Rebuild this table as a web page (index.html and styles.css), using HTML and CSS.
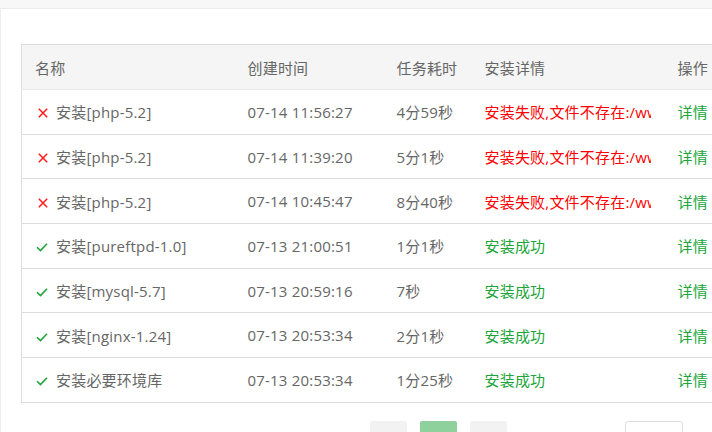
FILE: index.html
```html
<!DOCTYPE html>
<html lang="zh-CN">
<head>
<meta charset="utf-8">
<link rel="stylesheet" href="styles.css">
</head>
<body>
<div class="topbar"></div>
<div class="panel">
  <table class="tasks">
    <colgroup>
      <col class="c-name"><col class="c-time"><col class="c-dur"><col class="c-detail"><col class="c-op">
    </colgroup>
    <thead>
      <tr><th>名称</th><th>创建时间</th><th>任务耗时</th><th>安装详情</th><th>操作</th></tr>
    </thead>
    <tbody>
      <tr>
        <td><span class="st fail"><svg viewBox="0 0 10 10" width="10" height="10"><path d="M0.8 0.8 L9.2 9.2 M9.2 0.8 L0.8 9.2" stroke="#ff1a1a" stroke-width="1.5" fill="none"/></svg></span>安装[php-5.2]</td>
        <td>07-14 11:56:27</td><td>4分59秒</td><td class="msg err"><div class="clip">安装失败,文件不存在:/www/server/php</div></td><td class="op">详情</td>
      </tr>
      <tr>
        <td><span class="st fail"><svg viewBox="0 0 10 10" width="10" height="10"><path d="M0.8 0.8 L9.2 9.2 M9.2 0.8 L0.8 9.2" stroke="#ff1a1a" stroke-width="1.5" fill="none"/></svg></span>安装[php-5.2]</td>
        <td>07-14 11:39:20</td><td>5分1秒</td><td class="msg err"><div class="clip">安装失败,文件不存在:/www/server/php</div></td><td class="op">详情</td>
      </tr>
      <tr>
        <td><span class="st fail"><svg viewBox="0 0 10 10" width="10" height="10"><path d="M0.8 0.8 L9.2 9.2 M9.2 0.8 L0.8 9.2" stroke="#ff1a1a" stroke-width="1.5" fill="none"/></svg></span>安装[php-5.2]</td>
        <td>07-14 10:45:47</td><td>8分40秒</td><td class="msg err"><div class="clip">安装失败,文件不存在:/www/server/php</div></td><td class="op">详情</td>
      </tr>
      <tr>
        <td><span class="st ok"><svg viewBox="0 0 12 12" width="12" height="12"><path d="M1 6.2 L4.5 9.6 L11 2.8" stroke="#20a53a" stroke-width="1.6" fill="none"/></svg></span>安装[pureftpd-1.0]</td>
        <td>07-13 21:00:51</td><td>1分1秒</td><td class="msg okt">安装成功</td><td class="op">详情</td>
      </tr>
      <tr>
        <td><span class="st ok"><svg viewBox="0 0 12 12" width="12" height="12"><path d="M1 6.2 L4.5 9.6 L11 2.8" stroke="#20a53a" stroke-width="1.6" fill="none"/></svg></span>安装[mysql-5.7]</td>
        <td>07-13 20:59:16</td><td>7秒</td><td class="msg okt">安装成功</td><td class="op">详情</td>
      </tr>
      <tr>
        <td><span class="st ok"><svg viewBox="0 0 12 12" width="12" height="12"><path d="M1 6.2 L4.5 9.6 L11 2.8" stroke="#20a53a" stroke-width="1.6" fill="none"/></svg></span>安装[nginx-1.24]</td>
        <td>07-13 20:53:34</td><td>2分1秒</td><td class="msg okt">安装成功</td><td class="op">详情</td>
      </tr>
      <tr>
        <td><span class="st ok"><svg viewBox="0 0 12 12" width="12" height="12"><path d="M1 6.2 L4.5 9.6 L11 2.8" stroke="#20a53a" stroke-width="1.6" fill="none"/></svg></span>安装必要环境库</td>
        <td>07-13 20:53:34</td><td>1分25秒</td><td class="msg okt">安装成功</td><td class="op">详情</td>
      </tr>
    </tbody>
  </table>
  <div class="pager">
    <span class="pbtn"></span>
    <span class="pbtn active"></span>
    <span class="pbtn"></span>
    <span class="pinfo">/</span>
    <span class="pbox"></span>
  </div>
</div>
</body>
</html>
```
FILE: styles.css
```css
html, body {
  margin: 0;
  padding: 0;
  width: 712px;
  height: 432px;
  overflow: hidden;
  background: #f7f7f7;
  font-family: "Open Sans", "Noto Sans CJK SC", sans-serif;
  font-size: 15px;
  letter-spacing: 0.2px;
  color: #666;
}
.topbar {
  height: 8px;
  background: #f7f7f7;
}
.panel {
  background: #fff;
  border-top: 1px solid #ebebeb;
  border-left: 1px solid #eeeeee;
  padding: 35px 0 40px 20px;
}
.tasks {
  border-collapse: collapse;
  table-layout: fixed;
  width: 760px;
  border: 1px solid #dddddd;
}
.c-name { width: 213px; }
.c-time { width: 149px; }
.c-dur { width: 88px; }
.c-detail { width: 193px; }
.c-op { width: 117px; }
.tasks th {
  background: #f5f5f5;
  font-weight: normal;
  text-align: left;
  height: 44px;
  padding: 0 14px 0 13px;
  color: #666;
  border-bottom: 1px solid #e9e9e9;
}
.tasks td {
  height: 43.7px;
  padding: 0 14px 0 13px;
  border-bottom: 1px solid #dddddd;
  white-space: nowrap;
  overflow: hidden;
}
.st {
  display: inline-block;
  width: 12px;
  height: 12px;
  margin-right: 9px;
  vertical-align: -1px;
}
.st svg { display: block; }
.st.fail { margin-left: 3px; width: 10px; margin-right: 8px; }
.st.fail svg { margin-top: 1px; }
.st.ok { margin-left: 1px; margin-right: 8px; }
.clip {
  overflow: hidden;
  white-space: nowrap;
  width: 166px;
}
.err { color: #ff0000; }
.okt { color: #20a53a; }
.op { color: #20a53a; }
.pager {
  display: flex;
  align-items: flex-start;
  margin-top: 18px;
  padding-left: 349px;
}
.pbtn {
  width: 37px;
  height: 30px;
  background: #f2f2f2;
  border-radius: 2px;
  margin-right: 13px;
}
.pbtn.active { background: #8fd19d; }
.pinfo {
  margin-left: 33px;
  width: 72px;
  color: #666;
  line-height: 30px;
  margin-top: 4px;
}
.pbox {
  width: 56px;
  height: 28px;
  border: 1px solid #dddddd;
  border-radius: 3px;
}
```
